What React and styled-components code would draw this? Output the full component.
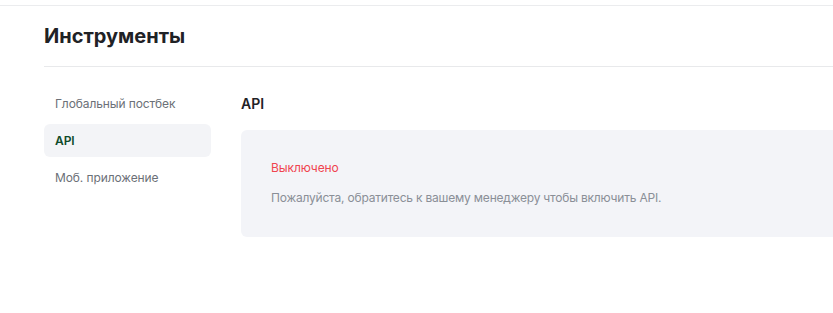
import React from 'react'
import styled, { createGlobalStyle } from 'styled-components'

const GlobalStyle = createGlobalStyle`
  html, body {
    margin: 0;
    padding: 0;
    background: #ffffff;
    overflow: hidden;
  }
  body {
    font-family: Inter, "Noto Sans", "Liberation Sans", sans-serif;
    color: #1f2226;
  }
`

const Page = styled.div`
  width: 1100px;
`

const TopBar = styled.div`
  height: 5px;
  border-bottom: 1px solid #ebecee;
`

const Container = styled.div`
  padding-left: 44px;
`

const Header = styled.div`
  height: 60px;
  display: flex;
  align-items: center;
  border-bottom: 1px solid #e8e9eb;
`

const Title = styled.h1`
  margin: 0;
  font-size: 20px;
  font-weight: 700;
  color: #1f2226;
`

const Body = styled.div`
  display: flex;
  gap: 30px;
  padding-top: 20px;
`

const Sidebar = styled.nav`
  width: 167px;
  display: flex;
  flex-direction: column;
  gap: 4px;
`

const NavItem = styled.div`
  height: 33px;
  display: flex;
  align-items: center;
  padding-left: 11px;
  border-radius: 6px;
  font-size: 12px;
  letter-spacing: -0.1px;
  font-weight: ${p => (p.$active ? 600 : 400)};
  color: ${p => (p.$active ? '#0e4a2a' : '#6b7077')};
  background: ${p => (p.$active ? '#f3f4f7' : 'transparent')};
`

const Content = styled.section`
  flex: 1;
`

const SectionTitle = styled.h2`
  margin: 0;
  height: 32px;
  display: flex;
  align-items: center;
  font-size: 14px;
  font-weight: 600;
  color: #1f2226;
`

const Card = styled.div`
  margin-top: 11px;
  height: 107px;
  box-sizing: border-box;
  padding: 30px 30px 0;
  background: #f3f4f8;
  border-radius: 6px;
`

const Status = styled.div`
  font-size: 12px;
  line-height: 16px;
  letter-spacing: -0.1px;
  color: #f0444f;
`

const Hint = styled.div`
  margin-top: 14px;
  font-size: 12px;
  line-height: 16px;
  letter-spacing: -0.2px;
  color: #8a8f97;
`

const items = ['Глобальный постбек', 'API', 'Моб. приложение']

export default function App() {
  return (
    <Page>
      <GlobalStyle />
      <TopBar />
      <Container>
        <Header>
          <Title>Инструменты</Title>
        </Header>
        <Body>
          <Sidebar>
            {items.map(item => (
              <NavItem key={item} $active={item === 'API'}>
                {item}
              </NavItem>
            ))}
          </Sidebar>
          <Content>
            <SectionTitle>API</SectionTitle>
            <Card>
              <Status>Выключено</Status>
              <Hint>Пожалуйста, обратитесь к вашему менеджеру чтобы включить API.</Hint>
            </Card>
          </Content>
        </Body>
      </Container>
    </Page>
  )
}
